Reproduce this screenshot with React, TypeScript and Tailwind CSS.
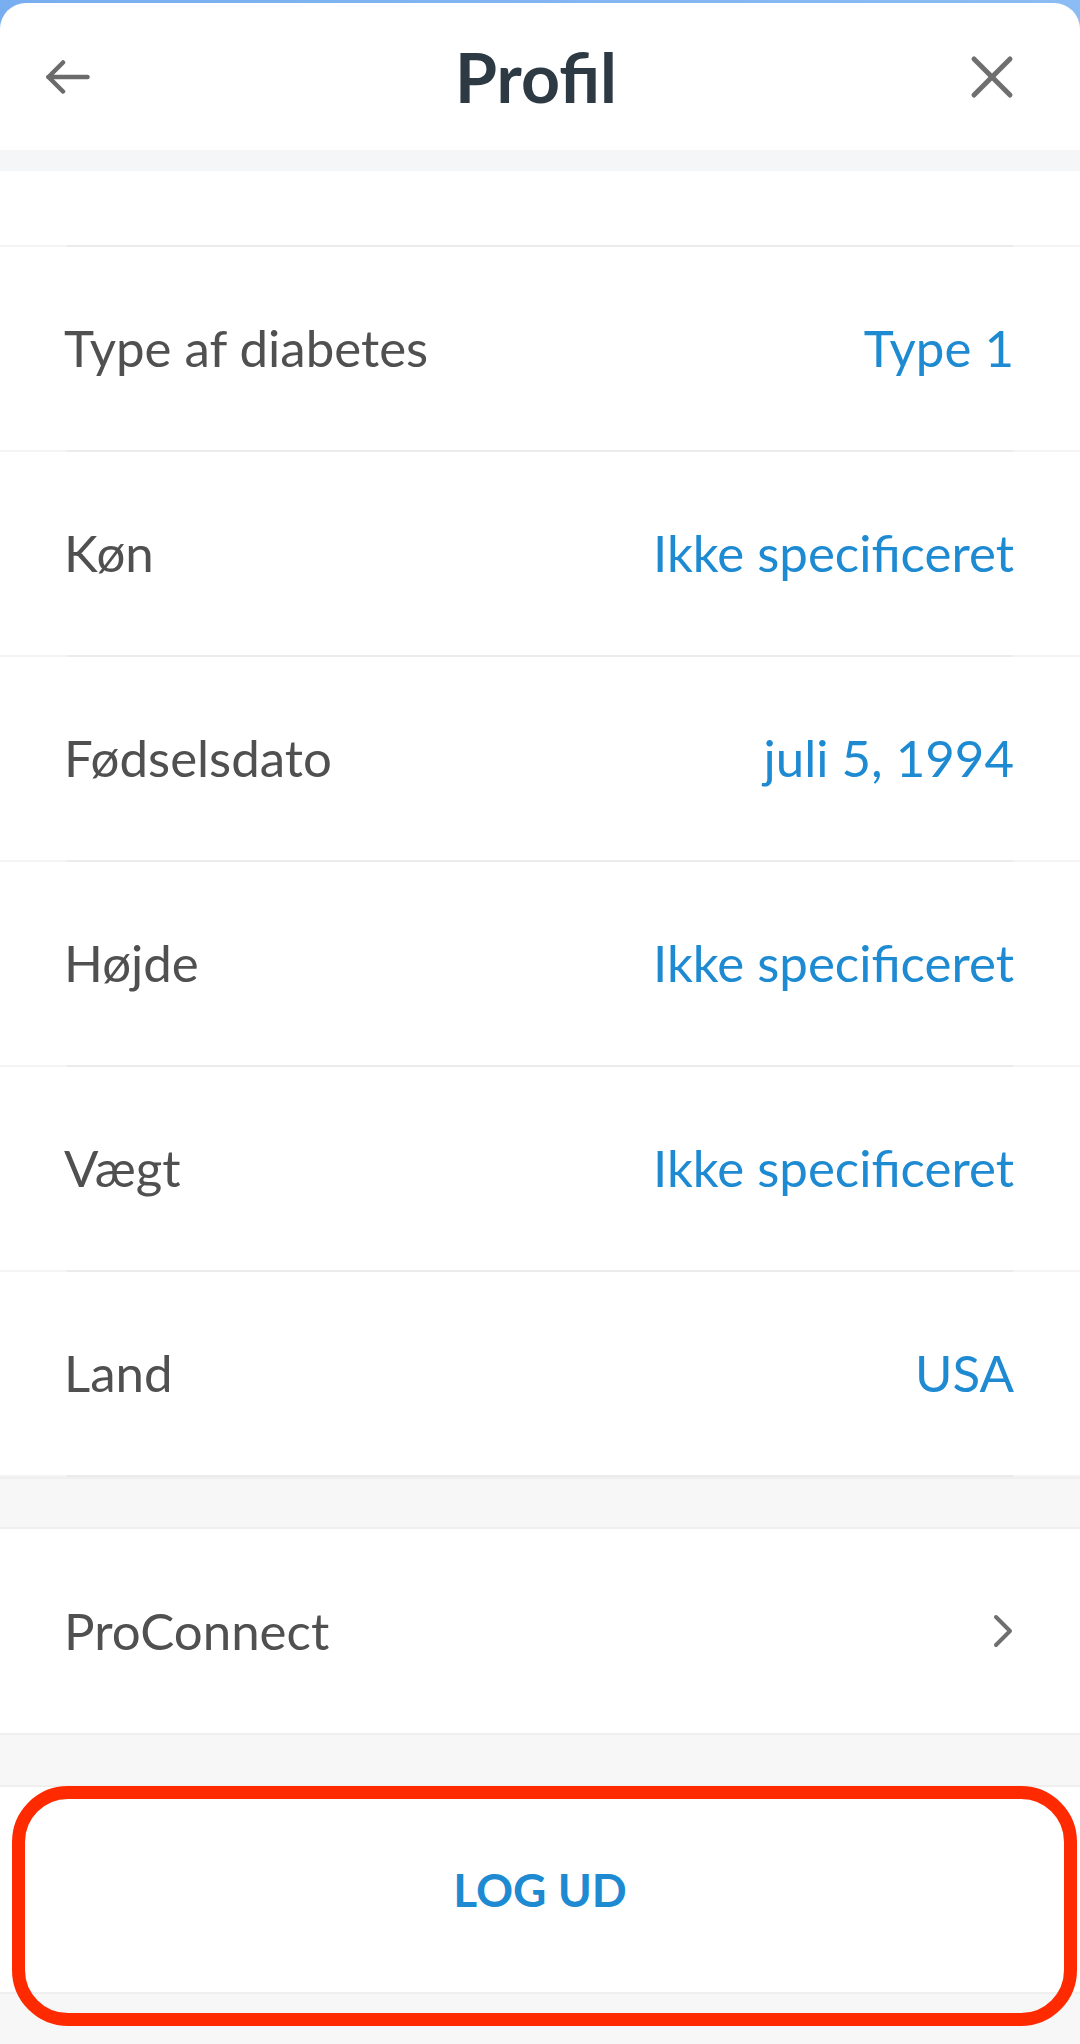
import React from 'react';

const rows = [
  { label: 'Type af diabetes', value: 'Type 1' },
  { label: 'Køn', value: 'Ikke specificeret' },
  { label: 'Fødselsdato', value: 'juli 5, 1994' },
  { label: 'Højde', value: 'Ikke specificeret' },
  { label: 'Vægt', value: 'Ikke specificeret' },
  { label: 'Land', value: 'USA' },
];

const Separator: React.FC = () => (
  <div className="h-[2px] bg-[#f4f4f4]">
    <div className="mx-[67px] h-full bg-[#ebebeb]"></div>
  </div>
);

const Band: React.FC<{ h: string }> = ({ h }) => (
  <div className={`${h} bg-[#f7f7f8] border-y-2 border-[#efefef]`}></div>
);

const App: React.FC = () => {
  return (
    <div className="min-h-[2044px] w-[1080px] bg-gradient-to-r from-[#78aef0] to-[#8bbcf3] pt-[3px] font-['Lato','Noto_Sans',sans-serif]">
      <div className="bg-white rounded-t-[26px] overflow-hidden">
        {/* Header */}
        <div className="h-[147px] grid grid-cols-[1fr_auto_1fr] items-center pl-[46px] pr-[66px]">
          <svg width="44" height="34" viewBox="0 0 44 34" fill="none" stroke="#6b6b6b" strokeWidth="4.5" strokeLinecap="round" strokeLinejoin="round">
            <polyline points="17,2.5 2.5,17 17,31.5" />
            <line x1="2.5" y1="17" x2="41.5" y2="17" />
          </svg>
          <h1 className="ml-[12px] text-[68px] leading-none font-bold text-[#2d3a43]">Profil</h1>
          <svg className="justify-self-end" width="44" height="44" viewBox="0 0 44 44" fill="none" stroke="#6f6f6f" strokeWidth="5" strokeLinecap="round">
            <line x1="4" y1="4" x2="40" y2="40" />
            <line x1="40" y1="4" x2="4" y2="40" />
          </svg>
        </div>

        {/* Scrolled list */}
        <div className="h-[21px] bg-[#f5f6f8]"></div>
        <div className="h-[74px] bg-white"></div>
        <Separator />

        {rows.map((row) => (
          <div key={row.label}>
            <div className="h-[203px] flex items-center justify-between pl-[64px] pr-[66px]">
              <span className="text-[51px] text-[#505050]">{row.label}</span>
              <span className="text-[51px] text-[#1d8ad2]">{row.value}</span>
            </div>
            <Separator />
          </div>
        ))}

        <Band h="h-[52px]" />

        <div className="h-[204px] flex items-center justify-between pl-[64px] pr-[66px]">
          <span className="text-[51px] text-[#505050]">ProConnect</span>
          <svg width="22" height="34" viewBox="0 0 22 34" fill="none" stroke="#6f6f6f" strokeWidth="4" strokeLinecap="round" strokeLinejoin="round">
            <polyline points="4,3 18,17 4,31" />
          </svg>
        </div>

        <Band h="h-[54px]" />

        <div className="relative">
          <div className="h-[205px] flex items-center justify-center">
            <span className="text-[46px] font-bold text-[#1d8ad2]">LOG UD</span>
          </div>
          <div className="h-[53px] bg-[#f7f7f8] border-t-2 border-[#efefef]"></div>
          <div className="h-[2px] bg-black"></div>
          <div className="absolute left-[12px] right-[3px] top-[-1px] h-[240px] border-[13px] border-[#ff2a00] rounded-[56px] pointer-events-none"></div>
        </div>
      </div>
    </div>
  );
};

export default App;
